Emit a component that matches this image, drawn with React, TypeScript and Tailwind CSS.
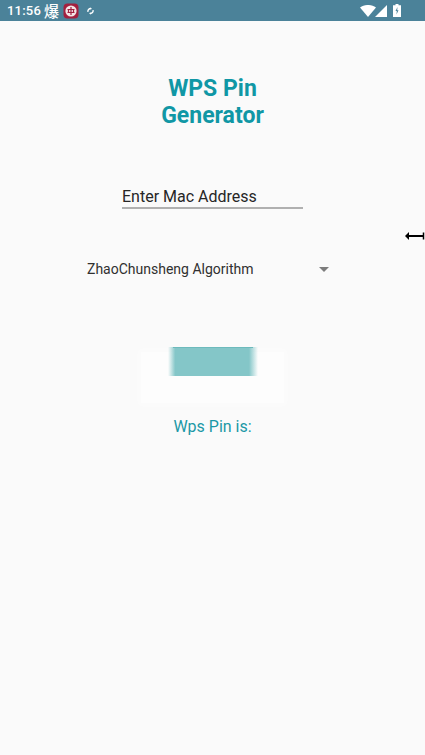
export default function App() {
  return (
    <div className="relative flex h-[755px] w-[425px] flex-col items-center overflow-hidden bg-[#fafafa] font-['Roboto',sans-serif]">
      <div className="flex h-[21px] w-full shrink-0 items-center bg-[#4b8299] pl-[7px] pr-[24px] text-white">
        <span className="text-[13px] font-medium leading-none tracking-[0.2px]">11:56</span>
        <span className="ml-[3px] font-['Noto_Sans_CJK_SC',sans-serif] text-[15px] font-medium leading-none">爆</span>
        <svg className="ml-[4px]" width="16" height="16" viewBox="0 0 16 16">
          <rect x="0.5" y="0.5" width="15" height="15" rx="4" fill="#a3203f" />
          <circle cx="8" cy="8" r="5.6" fill="#f4e4e6" />
          <path d="M4.5 6.5h7M4.5 9.5h7M8 4v8M5.5 6.5v3M10.5 6.5v3" stroke="#a3203f" strokeWidth="1.2" fill="none" />
        </svg>
        <svg className="ml-[8px]" width="7" height="8" viewBox="0 0 8 8" fill="none" stroke="#fff" strokeWidth="1.6">
          <path d="M1.2 5A3 3 0 0 1 4.5 1.2M6.8 3A3 3 0 0 1 3.5 6.8" />
          <path d="M4 0l1.6 1.3L4 2.6zM4 8L2.4 6.7 4 5.4z" fill="#fff" stroke="none" />
        </svg>
        <div className="ml-auto flex items-center">
          <svg width="16" height="12" viewBox="0 0 16 12">
            <path d="M0 2.6C4.5-.9 11.500-.9 16 2.600L8 12z" fill="#fff" />
          </svg>
          <svg className="ml-[-1px]" width="12" height="12" viewBox="0 0 12 12">
            <path d="M0 12L12 0v12z" fill="#fff" />
          </svg>
          <svg className="ml-[6px]" width="8" height="13" viewBox="0 0 8 13">
            <path d="M2.500 0h3v1.300H8V13H0V1.300h2.500z" fill="#fff" />
            <path d="M4.500 3L2.500 7h1.300L3.500 10.500 5.500 6.200H4.200z" fill="#4b8299" />
          </svg>
        </div>
      </div>

      <h1 className="mt-[54px] text-center text-[23px] font-bold leading-[27px] text-[#1097a5]">
        WPS Pin
        <br />
        Generator
      </h1>

      <div className="mt-[58px] h-[22px] w-[181px] border-b-[2px] border-[#b0b0b0] text-[16px] leading-[20px] text-[#262626]">
        Enter Mac Address
      </div>

      <div className="mr-[10px] mt-[45px] flex h-[30px] w-[243px] items-center justify-between pl-[1px] text-[14px] text-[#303030]">
        <span>ZhaoChunsheng Algorithm</span>
        <span className="h-0 w-0 border-x-[5px] border-t-[5px] border-x-transparent border-t-[#7c7c7c]" />
      </div>

      <div className="mt-[68px] h-[51px] w-[143px] bg-white/60 shadow-[0_0_6px_3px_rgba(255,255,255,0.4)]">
        <div className="mx-auto -mt-[5px] h-[29px] w-[90px] bg-[linear-gradient(90deg,rgba(130,198,200,0)_0%,#84c6c8_8%,#84c6c8_90%,rgba(130,198,200,0)_100%)]">
          <div className="mx-[5px] h-px bg-[#6dbabc]" />
        </div>
      </div>

      <p className="mt-[13px] text-[16px] leading-[22px] text-[#1a98a6]">Wps Pin is:</p>

      <svg className="absolute left-[404px] top-[231px]" width="21" height="10" viewBox="0 0 21 10">
        <path d="M5 1v8L1 5zM5 4h15v2H5z" fill="#000" />
        <path d="M19.500 1.500v7" stroke="#000" strokeWidth="1.500" />
      </svg>
    </div>
  );
}
